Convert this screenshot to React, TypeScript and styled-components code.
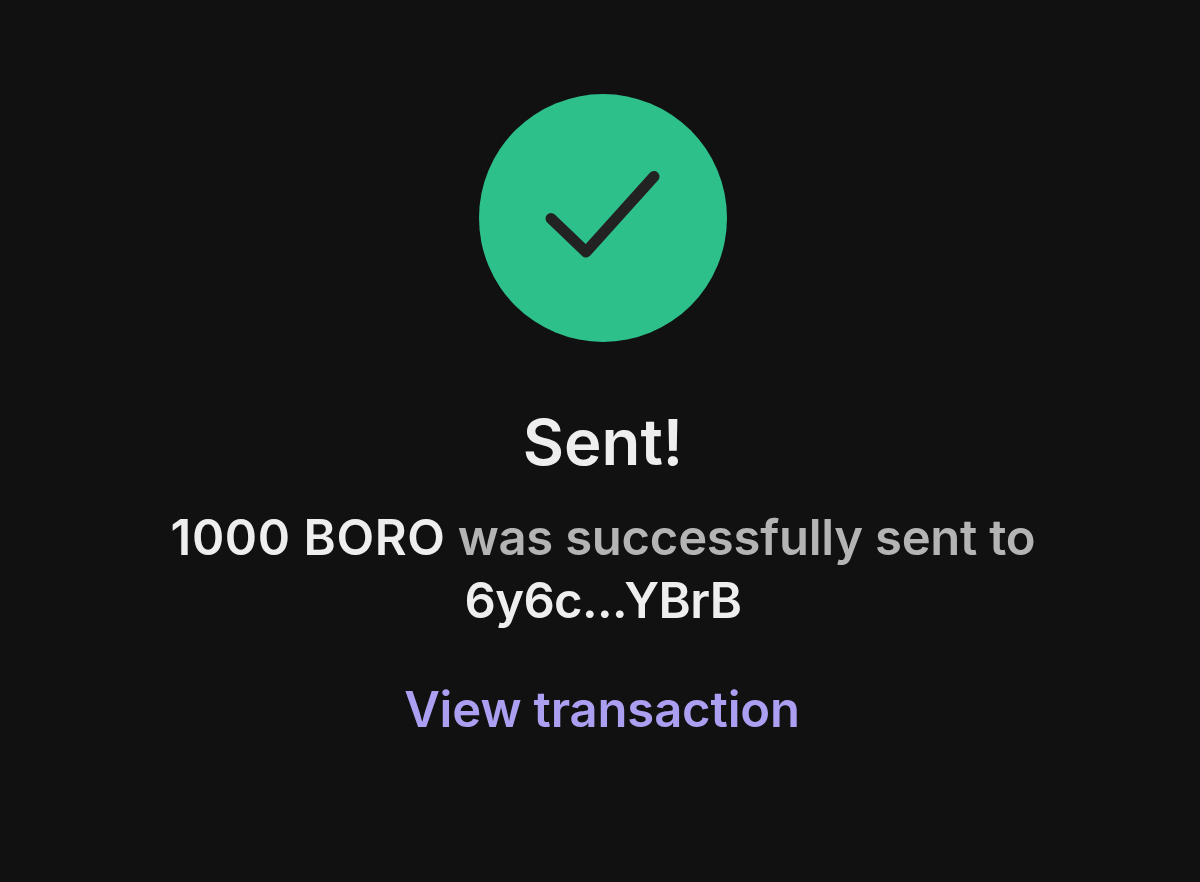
import React from 'react';
import styled, { createGlobalStyle } from 'styled-components';

const COLORS = {
  background: '#111111',
  success: '#2ec08b',
  check: '#222222',
  foreground: '#eeeeee',
  muted: '#b4b4b4',
  link: '#ab9ff2',
};

const GlobalStyle = createGlobalStyle`
  body {
    margin: 0;
    background: ${COLORS.background};
    font-family: Inter, sans-serif;
    -webkit-font-smoothing: antialiased;
  }
`;

// ============================================================================
// STYLED COMPONENTS
// ============================================================================

const Screen = styled.main`
  box-sizing: border-box;
  height: 882px;
  width: 1200px;
  padding: 94px 0 0 6px;
  display: flex;
  flex-direction: column;
  align-items: center;
  text-align: center;
  background: ${COLORS.background};
`;

const StatusIcon = styled.svg`
  display: block;
  width: 248px;
  height: 248px;
  flex-shrink: 0;
`;

const Title = styled.h1`
  margin: 61px 0 0;
  font-size: 63.5px;
  font-weight: 600;
  line-height: 78px;
  color: ${COLORS.foreground};
`;

const Message = styled.p`
  margin: 25px 0 0;
  width: 900px;
  font-size: 49px;
  font-weight: 600;
  line-height: 63px;
  letter-spacing: -0.25px;
  color: ${COLORS.muted};
`;

const Highlight = styled.span<{ $spacing: string }>`
  color: ${COLORS.foreground};
  letter-spacing: ${({ $spacing }) => $spacing};
`;

const TransactionLink = styled.a`
  margin-top: 46px;
  padding-right: 2px;
  font-size: 49px;
  font-weight: 600;
  line-height: 63px;
  letter-spacing: -0.15px;
  color: ${COLORS.link};
  text-decoration: none;
  cursor: pointer;
`;

// ============================================================================
// COMPONENT
// ============================================================================

const App: React.FC = () => (
  <>
    <GlobalStyle />
    <Screen>
      <StatusIcon viewBox="0 0 248 248" fill="none" aria-hidden="true">
        <circle cx="124" cy="124" r="124" fill={COLORS.success} />
        <path
          d="M72 124.5L107 158L175 82.5"
          stroke={COLORS.check}
          strokeWidth="11"
          strokeLinecap="round"
          strokeLinejoin="round"
        />
      </StatusIcon>
      <Title>Sent!</Title>
      <Message>
        <Highlight $spacing="0.6px">1000 BORO</Highlight> was successfully sent to{' '}
        <Highlight $spacing="-0.65px">6y6c...YBrB</Highlight>
      </Message>
      <TransactionLink>View transaction</TransactionLink>
    </Screen>
  </>
);

export default App;
